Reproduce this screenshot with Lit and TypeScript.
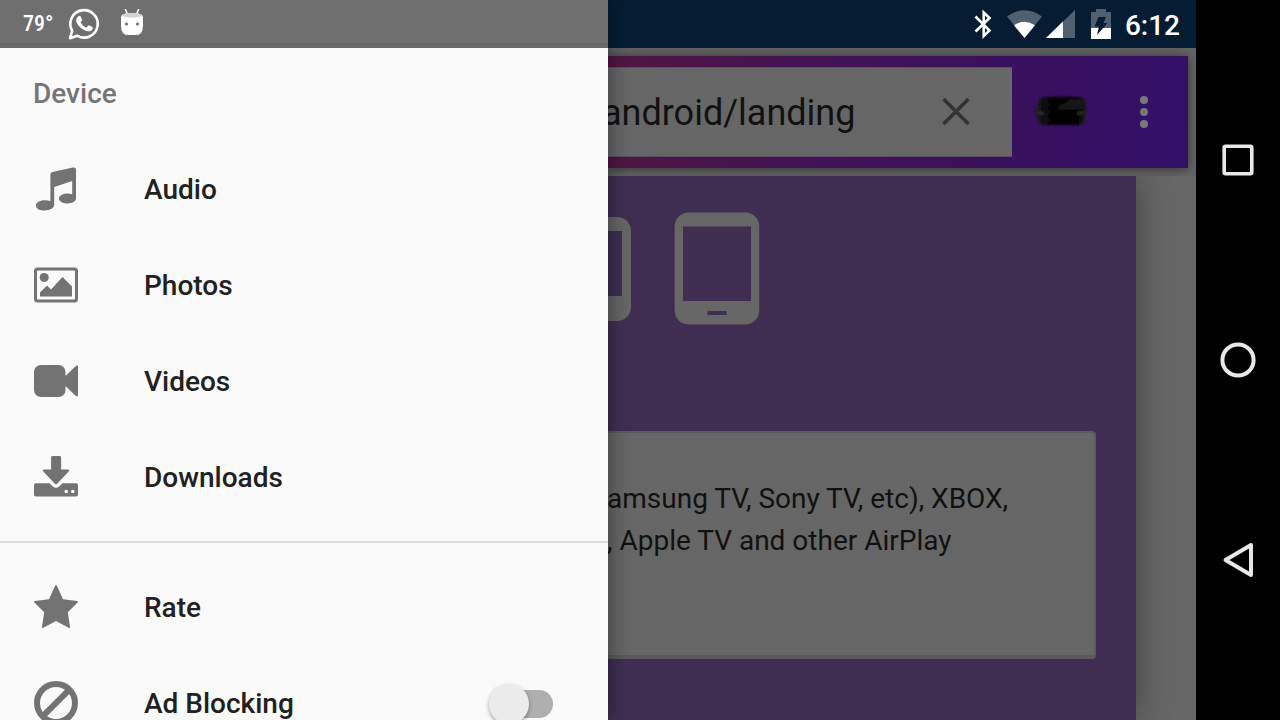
import { LitElement, html, css, svg } from "lit";
import { customElement, property, state } from "lit/decorators.js";

const icons: Record<string, unknown> = {
  audio: svg`<path d="M16.400 7.600c0-1.300.8-2.300 2-2.700L38.900.600c1.800-.5 3.100.4 3.100 2.200v28.500c0 3.300-3.800 5.200-8.600 5.200s-8.400-2.200-8.400-5 3.700-5.100 8.400-5.100c1.800 0 3.400.3 4.800.9V14.100L20.200 19.900v18.200c0 3-4 5.300-9.800 5.300S2 41.200 2 38.400s3.700-5.100 8.400-5.100c2.400 0 4.600.3 6 .9z"/>`,
  photos: svg`<path fill-rule="evenodd" d="M3.500 4.500h37A3.500 3.500 0 0 1 44 8v28a3.500 3.500 0 0 1-3.500 3.500h-37A3.500 3.500 0 0 1 0 36V8a3.500 3.500 0 0 1 3.500-3.500zM4 7.500a1 1 0 0 0-1 1v27a1 1 0 0 0 1 1h36a1 1 0 0 0 1-1v-27a1 1 0 0 0-1-1z"/><circle cx="10.200" cy="14.500" r="4.500"/><path d="M6 33.500v-4l7-7 4 4 11.500-12.500L38 23.500v10z"/>`,
  videos: svg`<path d="M7 6h17.500a7 7 0 0 1 7 7v4L41.500 7.300Q44 5.500 44 8v28q0 2.500-2.500.7L31.500 27v4a7 7 0 0 1-7 7H7a7 7 0 0 1-7-7V13a7 7 0 0 1 7-7z"/>`,
  downloads: svg`<path d="M18.500 1h7.200q1.400 0 1.400 1.400v12.200h6.700q2.400 0 .9 1.800L23.200 28.700q-1.200 1.100-2.400 0L9.300 16.400q-1.500-1.800.9-1.800h6.900V2.400Q17.100 1 18.500 1z"/><path fill-rule="evenodd" d="M2 28.300h13.400l3.500 3.200q3.100 2.600 6.200 0l3.500-3.200H42a2 2 0 0 1 2 2v9.200a2 2 0 0 1-2 2H2a2 2 0 0 1-2-2v-9.200a2 2 0 0 1 2-2zM32.200 34.700a1.800 1.800 0 1 0 0 3.600 1.800 1.800 0 0 0 0-3.600zM38.800 34.700a1.800 1.800 0 1 0 0 3.600 1.800 1.800 0 0 0 0-3.600z"/>`,
  rate: svg`<path d="M21 .9q1-1.600 2 0l6 13.300 14.300 1.700q1.200.4.300 1.500L33.800 27.200 36 41.900q0 1.400-1.300.8L22 35.900 9.300 42.700Q8 43.300 8 41.900l2.200-14.700L.4 17.400q-.9-1.100.3-1.500L15 14.200z"/>`,
  block: svg`<circle cx="22" cy="22" r="19" fill="none" stroke="currentColor" stroke-width="6"/><path d="M8.600 35.400 35.400 8.600" stroke="currentColor" stroke-width="6"/>`,
};

@customElement("drawer-item")
class DrawerItem extends LitElement {
  @property() icon = "";
  @property() label = "";
  @property({ type: Boolean }) toggle = false;

  static styles = css`
    :host { display: block; }
    * { box-sizing: border-box; }
    .row {
      display: flex;
      align-items: center;
      width: 100%;
      height: 96px;
      margin: 0;
      padding: 0 55px 0 34px;
      border: 0;
      background: none;
      color: #212121;
      font: 500 28px/36px Roboto, sans-serif;
      text-align: left;
      cursor: pointer;
    }
    .icon { width: 44px; height: 46px; flex: none; margin-right: 66px; color: #737373; fill: currentColor; }
    .label { flex: 1; }
    .switch {
      appearance: none;
      display: grid;
      align-items: center;
      width: 64px;
      height: 40px;
      margin: 0;
      cursor: pointer;
    }
    .switch::before, .switch::after { content: ""; grid-area: 1 / 1; }
    .switch::before { width: 56px; height: 28px; border-radius: 14px; background: #afafaf; justify-self: end; }
    .switch::after {
      width: 40px;
      height: 40px;
      border-radius: 50%;
      background: #ececec;
      box-shadow: 0 2px 4px rgba(0, 0, 0, 0.35);
    }
    .switch:checked::after { justify-self: end; }
  `;

  render() {
    const glyph = html`<svg class="icon" viewBox="0 0 44 46" aria-hidden="true">${icons[this.icon]}</svg>`;
    return this.toggle
      ? html`<label class="row">${glyph}<span class="label">${this.label}</span><input class="switch" type="checkbox" /></label>`
      : html`<button class="row">${glyph}<span class="label">${this.label}</span></button>`;
  }
}

@customElement("app-root")
class AppRoot extends LitElement {
  @state() private address = "android/landing";

  static styles = css`
    :host {
      display: grid;
      grid-template-columns: 608px minmax(0, 1fr) 84px;
      height: 100vh;
      overflow: hidden;
      background: #000;
      font-family: Roboto, sans-serif;
    }
    * { box-sizing: border-box; }
    button { padding: 0; border: 0; background: none; display: grid; place-items: center; cursor: pointer; }
    svg { display: block; }

    .drawer {
      z-index: 2;
      min-height: 0;
      overflow: hidden;
      background: #fafafa;
      box-shadow: 0 0 20px rgba(0, 0, 0, 0.45);
    }
    .notices {
      display: flex;
      align-items: center;
      height: 48px;
      padding-left: 23px;
      background: linear-gradient(#6f6f6f 43px, #636363 43px, #6a6a6a 45px);
      color: #fff;
    }
    .temp { width: 45px; font: 500 22px/48px "Roboto Condensed", "Liberation Sans Narrow", Roboto, sans-serif; }
    .chat { margin-right: 20px; }
    .heading { margin: 0; height: 94px; padding-left: 33px; font-size: 28px; line-height: 92px; font-weight: 500; color: #757575; }
    .rule { height: 2px; margin: 15px 0 17px; border: 0; background: #dcdcdc; }

    .page { display: flex; flex-direction: column; min-height: 0; overflow: hidden; background: #666; }
    .status {
      display: flex;
      align-items: center;
      justify-content: flex-end;
      flex: none;
      height: 48px;
      padding-right: 16px;
      background: #051c33;
      color: #fff;
    }
    .signals { display: flex; gap: 4px; margin: 0 16px 0 15px; }
    .clock { margin-left: 14px; padding-top: 3px; font-size: 28px; line-height: 36px; font-weight: 500; }

    .head { z-index: 1; flex: none; padding: 8px 8px 8px 0; background: #646464; overflow: hidden; }
    .toolbar {
      display: flex;
      height: 112px;
      padding: 11px 10px 11px 0;
      background: linear-gradient(100deg, #4f1641, #40125a 45%, #38105e 70%, #320f68);
      box-shadow: 0 1px 10px rgba(0, 0, 0, 0.5);
    }
    .search { display: flex; flex: 1; min-width: 0; background: #666; border: 1px solid #5d4e62; border-width: 1px 0; }
    .address {
      flex: 1;
      min-width: 0;
      padding: 2px 0 0;
      border: 0;
      outline: 0;
      background: none;
      color: #111;
      font: 36px/48px Roboto, sans-serif;
      text-indent: -6px;
    }
    .clear { width: 112px; }
    .cast { width: 98px; }
    .more { width: 68px; }

    .panel {
      flex: 1;
      min-height: 0;
      margin-right: 60px;
      padding: 36px 40px 0 0;
      background: #3f2e52;
      box-shadow: 0 0 32px rgba(0, 0, 0, 0.36);
    }
    .devices { display: flex; align-items: center; gap: 43px; }
    .card {
      margin-top: 106px;
      padding: 45px 16px 93px 0;
      background: #666;
      border: solid #5a5a5a;
      border-width: 2px 2px 4px 0;
      border-radius: 0 4px 4px 0;
    }
    .text { margin: 0; font-size: 28px; line-height: 42px; color: #111; white-space: nowrap; text-indent: -1px; }
    .line { display: block; }

    .nav {
      display: grid;
      grid-template-rows: repeat(3, 200px);
      align-content: center;
    }
  `;

  render() {
    return html`
      <aside class="drawer">
        <div class="notices">
          <span class="temp">79°</span>
          <svg class="chat" width="32" height="32" viewBox="0 0 32 32" role="img" aria-label="Chat">
            <path d="M2 30.200 4.200 22.800a13.700 13.700 0 1 1 5.100 5z" fill="none" stroke="#fff" stroke-width="2.600" stroke-linejoin="round"/>
            <path d="M10.500 8.300c.7-.7 1.800-.6 2.200.2l1.300 3c.2.600.1 1-.3 1.500l-1.100 1.300c1.300 2.500 3.200 4.200 5.700 5.400l1.600-1.800c.4-.5.800-.5 1.400-.3l3 1.500c.6.300.7.700.5 1.400-.7 2.300-3 3.100-5 2.700-5.800-1.300-10-5.300-11.400-9.500-.7-2.200.4-4.400 2.100-5.400z" fill="#fff"/>
          </svg>
          <svg width="24" height="30" viewBox="0 0 24 30" role="img" aria-label="Debug">
            <path d="M5.300 0l2 5M18.700 0l-2 5" stroke="#fff" stroke-width="1.500"/>
            <path d="M1 7.500Q2 4 12 4T23 7.500V16.500q0 9.500-7 9.500H8q-7 0-7-9.500z" fill="#fff"/>
            <ellipse cx="12" cy="6.300" rx="9.500" ry="2.400" fill="#d2d2d2"/>
            <circle cx="6.500" cy="15" r="1.500" fill="#666"/><circle cx="17.500" cy="15" r="1.500" fill="#666"/>
          </svg>
        </div>
        <h2 class="heading">Device</h2>
        <drawer-item icon="audio" label="Audio"></drawer-item>
        <drawer-item icon="photos" label="Photos"></drawer-item>
        <drawer-item icon="videos" label="Videos"></drawer-item>
        <drawer-item icon="downloads" label="Downloads"></drawer-item>
        <hr class="rule" />
        <drawer-item icon="rate" label="Rate"></drawer-item>
        <drawer-item icon="block" label="Ad Blocking" toggle></drawer-item>
      </aside>

      <main class="page">
        <div class="status">
          <svg width="18" height="30" viewBox="0 0 18 30" role="img" aria-label="Bluetooth">
            <path d="M1.500 7.500 15.500 21.500 9.700 27V3.500L15.500 9 1.500 22.500" fill="none" stroke="#fff" stroke-width="2.600"/>
          </svg>
          <div class="signals">
            <svg width="35" height="30" viewBox="0 0 35 30" role="img" aria-label="Wi-Fi">
              <path d="M0 7.500Q17.500-5 35 7.500L17.500 29z" fill="#506070"/>
              <path d="M7 16.300Q17.500 9 28 16.300L17.500 29z" fill="#fff"/>
            </svg>
            <svg width="29" height="30" viewBox="0 0 29 30" role="img" aria-label="Mobile signal">
              <path d="M29 1v28H0z" fill="#506070"/><path d="M17 12.500V29H0z" fill="#fff"/>
            </svg>
          </div>
          <svg width="20" height="30" viewBox="0 0 20 30" role="img" aria-label="Battery charging">
            <path d="M5 0h10v3h5v26H0V3h5z" fill="#506070"/>
            <path d="M0 19h20v11H0z" fill="#fff"/>
            <path d="M7.500 8h7.500l-2.500 6h4L6 26l2-8.500H3.500z" fill="#051c33"/>
          </svg>
          <time class="clock">6:12</time>
        </div>

        <header class="head">
          <div class="toolbar">
            <form class="search" @submit=${(e: Event) => e.preventDefault()}>
              <input class="address" aria-label="Address" .value=${this.address}
                @input=${(e: Event) => (this.address = (e.target as HTMLInputElement).value)} />
              <button class="clear" type="button" aria-label="Clear" @click=${() => (this.address = "")}>
                <svg width="28" height="28" viewBox="0 0 28 28"><path d="M1.500 1l25 25M26.500 1l-25 25" stroke="#333" stroke-width="3.600"/></svg>
              </button>
            </form>
            <button class="cast" aria-label="Cast">
              <svg width="56" height="34" viewBox="0 0 56 34">
                <defs>
                  <linearGradient id="shell" x1="0" x2="1" y1="0" y2="0">
                    <stop offset="0" stop-color="#222"/><stop offset=".16" stop-color="#070707"/>
                    <stop offset=".84" stop-color="#050505"/><stop offset="1" stop-color="#252525"/>
                  </linearGradient>
                  <filter id="soft"><feGaussianBlur stdDeviation="1"/></filter>
                </defs>
                <g filter="url(#soft)">
                  <path d="M0 18l5-1.500v3z" fill="#1d0b2c"/>
                  <path d="M9 2.500Q28 1 49 2.500q4 1.500 4.500 9v9q-.5 8-7 9.500H11q-7-1.500-8-9.500v-7q1-9.500 6-11z" fill="url(#shell)"/>
                  <path d="M22 14 38 4q9 0 13 1.500l1.500 9z" fill="#141414"/>
                  <path d="M5 18l6 .5M44 18.500l6-.5" stroke="#3c3c3c" stroke-width="1.600"/>
                </g>
              </svg>
            </button>
            <button class="more" aria-label="More options">
              <svg width="10" height="34" viewBox="0 0 10 34" fill="#777"><circle cx="5" cy="5" r="4"/><circle cx="5" cy="17" r="4"/><circle cx="5" cy="29" r="4"/></svg>
            </button>
          </div>
        </header>

        <section class="panel">
          <div class="devices">
            <svg width="23" height="104" viewBox="0 0 23 104" aria-hidden="true">
              <path fill="#666" fill-rule="evenodd" d="M0 0h9a14 14 0 0 1 14 14v76a14 14 0 0 1-14 14H0zM0 14v65h14V14z"/>
            </svg>
            <svg width="86" height="113" viewBox="0 0 86 113" aria-hidden="true">
              <path fill="#666" fill-rule="evenodd" d="M14.700.500h56.500a14 14 0 0 1 14 14v84a14 14 0 0 1-14 14H14.700a14 14 0 0 1-14-14v-84a14 14 0 0 1 14-14zM9 14.500v74.500h68v-74.500zM33.500 99v4h19v-4z"/>
            </svg>
          </div>
          <div class="card">
            <p class="text">
              <span class="line">amsung TV, Sony TV, etc), XBOX,</span>
              <span class="line">, Apple TV and other AirPlay</span>
            </p>
          </div>
        </section>
      </main>

      <nav class="nav" aria-label="System">
        <button aria-label="Recent apps">
          <svg width="32" height="32" viewBox="0 0 32 32"><rect x="2.200" y="2.200" width="27.600" height="27.600" rx="1.500" fill="none" stroke="#e8e8e8" stroke-width="3.600"/></svg>
        </button>
        <button aria-label="Home">
          <svg width="36" height="36" viewBox="0 0 36 36"><circle cx="18" cy="18" r="15.600" fill="none" stroke="#e8e8e8" stroke-width="4"/></svg>
        </button>
        <button aria-label="Back">
          <svg width="32" height="36" viewBox="0 0 32 36"><path d="M29 3v30L3.500 18z" fill="none" stroke="#e8e8e8" stroke-width="4" stroke-linejoin="round"/></svg>
        </button>
      </nav>
    `;
  }
}
